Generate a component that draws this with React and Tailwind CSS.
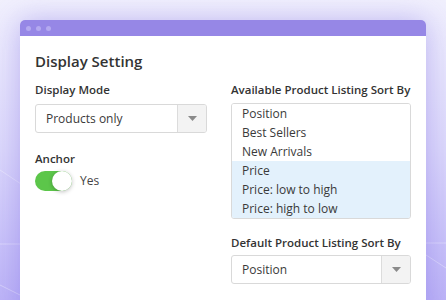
import React from "react";

function Caret() {
  return (
    <svg width="9" height="6" viewBox="0 0 9 6" className="block">
      <path d="M0 0 L9 0 L4.5 5 Z" fill="#8a8a8a" />
    </svg>
  );
}

function Select({ value }) {
  return (
    <div className="flex h-[29px] rounded-[3px] border border-[#d9d9d9] bg-white overflow-hidden">
      <div className="flex-1 flex items-center pl-[10px] text-[12px] text-[#3a3a3a]">{value}</div>
      <div className="w-[29px] flex items-center justify-center bg-[#f3f3f3] border-l border-[#dcdcdc]">
        <Caret />
      </div>
    </div>
  );
}

export default function App() {
  const items = ["Position", "Best Sellers", "New Arrivals", "Price", "Price: low to high", "Price: high to low"];
  return (
    <div
      className="relative w-[446px] h-[300px] overflow-hidden bg-gradient-to-b from-[#f1f0fd] via-[#dcd8fb] to-[#bdb4f7]"
      style={{ fontFamily: '"Open Sans", sans-serif' }}
    >
      <svg className="absolute inset-0" width="446" height="300" viewBox="0 0 446 300">
        <g stroke="#ffffff" strokeOpacity="0.35" strokeWidth="1" fill="none">
          <line x1="0" y1="170" x2="60" y2="210" />
          <line x1="0" y1="244" x2="40" y2="244" />
          <line x1="0" y1="285" x2="30" y2="300" />
          <line x1="426" y1="243" x2="446" y2="243" />
          <line x1="426" y1="255" x2="446" y2="268" />
        </g>
      </svg>
      <div className="relative pt-[20px] px-[20px]">
        <div className="h-[300px] rounded-t-[5px] bg-white shadow-[0_0_28px_rgba(100,80,220,0.35)] overflow-hidden">
          <div className="h-[16px] bg-[#9687e6] flex items-center gap-[5px] pl-[6px]">
            <span className="w-[5px] h-[5px] rounded-full bg-[#b4a9f0]" />
            <span className="w-[5px] h-[5px] rounded-full bg-[#b4a9f0]" />
            <span className="w-[5px] h-[5px] rounded-full bg-[#b4a9f0]" />
          </div>
          <div className="px-[15px] pt-[15px]">
            <div className="text-[15px] font-semibold text-[#333] leading-[20px] whitespace-nowrap">Display Setting</div>
            <div className="flex gap-[24px] mt-[11px]">
              <div className="w-[172px]">
                <div className="text-[11.5px] font-semibold text-[#333] leading-[16px] whitespace-nowrap">Display Mode</div>
                <div className="mt-[6px]">
                  <Select value="Products only" />
                </div>
                <div className="text-[11.5px] font-semibold text-[#333] leading-[16px] mt-[18px] whitespace-nowrap">Anchor</div>
                <div className="flex items-center gap-[8px] mt-[4px]">
                  <div className="relative w-[37px] h-[20px] rounded-full bg-[#5cc64a]">
                    <div className="absolute right-0 top-0 w-[20px] h-[20px] rounded-full bg-white shadow-[0_1px_4px_rgba(0,0,0,0.25)]" />
                  </div>
                  <span className="text-[12px] text-[#444]">Yes</span>
                </div>
              </div>
              <div className="w-[180px]">
                <div className="text-[11.5px] font-semibold text-[#333] leading-[16px] whitespace-nowrap">Available Product Listing Sort By</div>
                <div className="mt-[5px] rounded-[3px] border border-[#d9d9d9] overflow-hidden">
                  {items.map((it, i) => (
                    <div
                      key={it}
                      className={
                        "h-[19px] flex items-center pl-[10px] text-[12px] text-[#3a3a3a] " +
                        (i >= 3 ? "bg-[#e3f1fc]" : "bg-white")
                      }
                    >
                      {it}
                    </div>
                  ))}
                </div>
                <div className="text-[11.5px] font-semibold text-[#333] leading-[16px] mt-[16px] whitespace-nowrap">Default Product Listing Sort By</div>
                <div className="mt-[4px]">
                  <Select value="Position" />
                </div>
              </div>
            </div>
          </div>
        </div>
      </div>
    </div>
  );
}
